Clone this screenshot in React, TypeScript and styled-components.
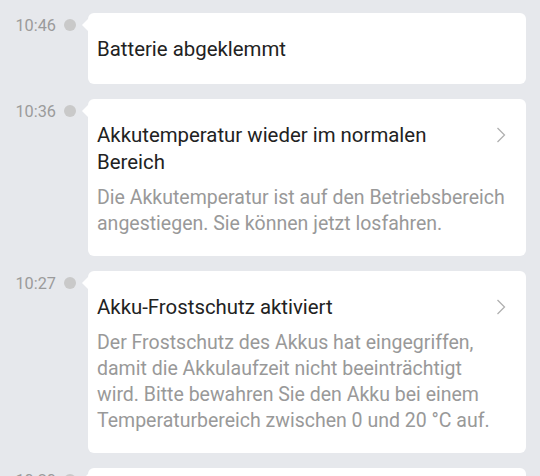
import React from "react";
import styled, { createGlobalStyle } from "styled-components";

const Global = createGlobalStyle`
  html, body { margin: 0; padding: 0; background: #e6e8ec; }
  body { font-family: Roboto, "Noto Sans", sans-serif; -webkit-font-smoothing: antialiased; }
`;

const Page = styled.div`
  display: flex;
  flex-direction: column;
  gap: 15px;
  padding: 13px 14px 20px 0;
`;

const Row = styled.div`
  display: grid;
  grid-template-columns: 88px 1fr;
  align-items: start;
`;

const Meta = styled.div`
  display: flex;
  align-items: center;
  justify-content: flex-end;
  height: 24px;
  padding-right: 12px;
  gap: 8px;
`;

const Time = styled.span`
  font-size: 16.3px;
  color: #9b9b9b;
`;

const Dot = styled.span`
  width: 12px;
  height: 12px;
  border-radius: 50%;
  background: #c9c9c9;
`;

const Card = styled.div<{ $hasDesc: boolean }>`
  position: relative;
  background: #fff;
  border-radius: 6px;
  padding: 23px 20px ${(p) => (p.$hasDesc ? "19px" : "21px")} 9px;
  &::before {
    content: "";
    position: absolute;
    left: -6px;
    top: 6px;
    border-top: 6px solid transparent;
    border-bottom: 6px solid transparent;
    border-right: 6px solid #fff;
  }
`;

const Title = styled.div`
  padding-right: 25px;
  font-size: 20.4px;
  line-height: 27px;
  color: #222;
`;

const Desc = styled.div`
  margin-top: 9px;
  font-size: 19.5px;
  line-height: 26px;
  color: #999;
`;

const Chevron = styled.svg`
  position: absolute;
  right: 20px;
  top: 28px;
  width: 10px;
  height: 16px;
`;

type Item = { time: string; title: string; desc?: string };

const items: Item[] = [
  { time: "10:46", title: "Batterie abgeklemmt" },
  {
    time: "10:36",
    title: "Akkutemperatur wieder im normalen Bereich",
    desc: "Die Akkutemperatur ist auf den Betriebsbereich angestiegen. Sie können jetzt losfahren.",
  },
  {
    time: "10:27",
    title: "Akku-Frostschutz aktiviert",
    desc: "Der Frostschutz des Akkus hat eingegriffen, damit die Akkulaufzeit nicht beeinträchtigt wird. Bitte bewahren Sie den Akku bei einem Temperaturbereich zwischen 0 und 20 °C auf.",
  },
  { time: "10:20", title: "Batterie angeschlossen" },
];

export default function App() {
  return (
    <>
      <Global />
      <Page>
        {items.map((it) => (
          <Row key={it.time}>
            <Meta>
              <Time>{it.time}</Time>
              <Dot />
            </Meta>
            <Card $hasDesc={!!it.desc}>
              <Title>{it.title}</Title>
              {it.desc && <Desc>{it.desc}</Desc>}
              {it.desc && (
                <Chevron viewBox="0 0 10 16">
                  <polyline points="1.5,1 8.5,8 1.5,15" fill="none" stroke="#b0b0b0" strokeWidth="1.3" />
                </Chevron>
              )}
            </Card>
          </Row>
        ))}
      </Page>
    </>
  );
}
